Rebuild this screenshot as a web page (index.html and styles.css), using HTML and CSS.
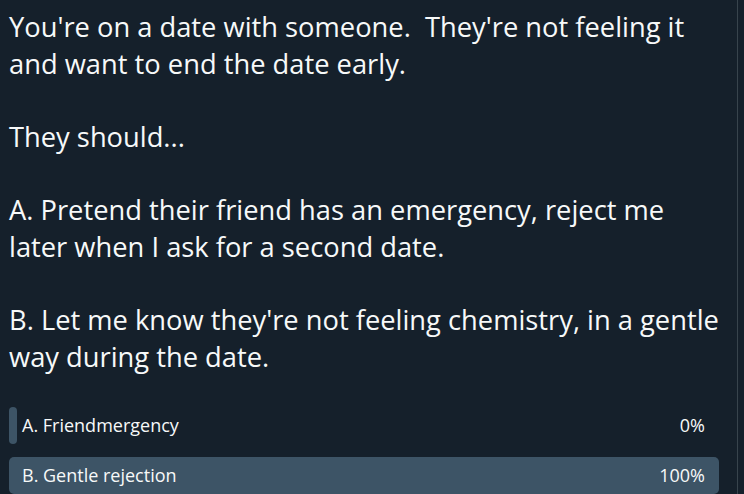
FILE: index.html
```html
<!DOCTYPE html>
<html lang="en">
<head>
<meta charset="utf-8">
<title>Poll</title>
<link rel="stylesheet" href="styles.css">
</head>
<body>
<div class="tweet">
  <div class="tweet-text">
    <p class="para">You're on a date with someone.  They're not feeling it<br>and want to end the date early.</p>
    <p class="para">They should...</p>
    <p class="para">A. Pretend their friend has an emergency, reject me<br>later when I ask for a second date.</p>
    <p class="para">B. Let me know they're not feeling chemistry, in a gentle<br>way during the date.</p>
  </div>
  <div class="poll">
    <div class="poll-row">
      <div class="poll-bar" style="width: 8px"></div>
      <span class="poll-label">A. Friendmergency</span>
      <span class="poll-pct">0%</span>
    </div>
    <div class="poll-row">
      <div class="poll-bar" style="width: 100%"></div>
      <span class="poll-label">B. Gentle rejection</span>
      <span class="poll-pct">100%</span>
    </div>
  </div>
</div>
</body>
</html>
```

FILE: styles.css
```css
html, body {
  margin: 0;
  padding: 0;
  background: #15202b;
  height: 100%;
}

body {
  font-family: "Open Sans", "Noto Sans", sans-serif;
  color: #f7f9f9;
}

.tweet {
  width: 738px;
  height: 100%;
  box-sizing: border-box;
  border-right: 1px solid #38444d;
  padding: 9px 0 0 9px;
  overflow: hidden;
}

.tweet-text {
  font-size: 27.3px;
  line-height: 36.67px;
}

.para {
  margin: 0 0 36.67px 0;
  white-space: pre-wrap;
}

.para:last-child {
  margin-bottom: 0;
}

.poll {
  display: flex;
  flex-direction: column;
  gap: 13px;
  width: 710px;
  margin-top: 31px;
}

.poll-row {
  position: relative;
  height: 37px;
  display: flex;
  align-items: center;
  justify-content: space-between;
  padding: 0 14px 0 13px;
  font-size: 18px;
}

.poll-bar {
  position: absolute;
  left: 0;
  top: 0;
  bottom: 0;
  background: #3d5466;
  border-radius: 5px;
}

.poll-label,
.poll-pct {
  position: relative;
}
```
